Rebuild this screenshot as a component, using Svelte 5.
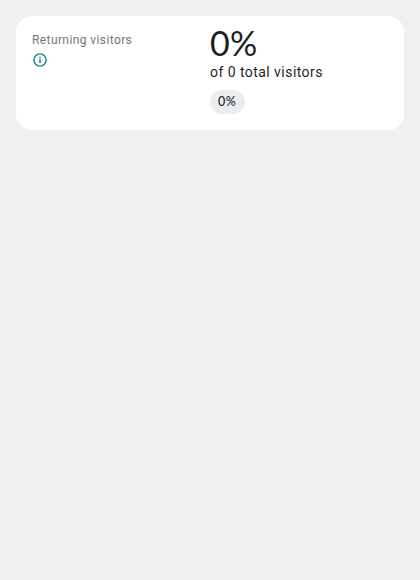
<script>
  const total = 0;
  const percent = '0%';
</script>

<section class="card">
  <div class="label">
    <span class="name">Returning visitors</span>
    <svg class="info" viewBox="0 0 16 16" aria-label="Info">
      <circle cx="8" cy="8" r="6.1" fill="none" stroke="#16827d" stroke-width="1.4" />
      <path fill="#16827d" d="M7.2 7.2h1.6V11H7.2zM7.2 4.8h1.6v1.4H7.2z" />
    </svg>
  </div>
  <div class="value">
    <span class="big">{percent}</span>
    <span class="sub">of {total} total visitors</span>
    <span class="chip">{percent}</span>
  </div>
</section>

<style>
  :global(body) {
    background: #f0f0f0;
  }
  .card {
    box-sizing: border-box;
    margin: 16px;
    height: 114px;
    padding: 0 16px;
    display: grid;
    grid-template-columns: 1fr 1fr;
    background: #fff;
    border-radius: 16px;
    font-family: Roboto, "Open Sans", sans-serif;
    white-space: nowrap;
  }
  .label {
    display: flex;
    flex-direction: column;
    padding-top: 16px;
  }
  .name {
    font-size: 12px;
    line-height: 16px;
    letter-spacing: 0.4px;
    color: #747678;
  }
  .info {
    width: 16px;
    height: 16px;
    margin-top: 4px;
  }
  .value {
    display: flex;
    flex-direction: column;
    align-items: flex-start;
    padding-top: 8px;
  }
  .big {
    font-family: Lato, sans-serif;
    font-size: 34px;
    line-height: 38px;
    margin-bottom: 2px;
    letter-spacing: 0.3px;
    color: #1f1f1f;
  }
  .sub {
    font-size: 14px;
    line-height: 16px;
    letter-spacing: 0.45px;
    color: #1f1f1f;
  }
  .chip {
    box-sizing: border-box;
    width: 35px;
    margin-top: 10px;
    height: 24px;
    padding: 0 8px;
    border-radius: 12px;
    background: #e9eef0;
    color: #1f1f1f;
    font-family: Lato, sans-serif;
    font-size: 12.5px;
    font-weight: 500;
    letter-spacing: 0.6px;
    line-height: 24px;
  }
</style>
